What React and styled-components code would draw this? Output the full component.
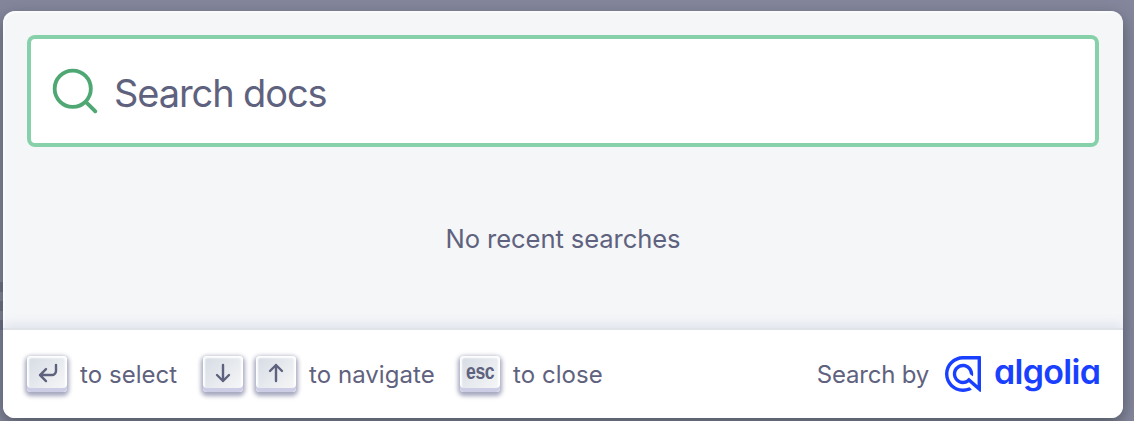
import React from "react";
import styled, { createGlobalStyle } from "styled-components";

const GlobalStyle = createGlobalStyle`
  *, *::before, *::after { box-sizing: border-box; }
  body {
    margin: 0;
    overflow: hidden;
    font-family: Inter, "Liberation Sans", sans-serif;
    font-weight: 400;
    color: #5f627e;
  }
`;

const Backdrop = styled.main`
  height: 421px;
  padding: 11px 11px 3px 3px;
  background:
    linear-gradient(#686b80, #686b80) 0 282px / 3px 10px no-repeat,
    linear-gradient(#686b80, #686b80) 0 301px / 3px 10px no-repeat,
    linear-gradient(#686b80, #686b80) 0 320px / 3px 10px no-repeat,
    #84869c;
`;

const Modal = styled.section`
  display: flex;
  flex-direction: column;
  height: 407px;
  border-radius: 12px;
  background: #f5f6f8;
  box-shadow: inset 2px 2px 0 rgba(255, 255, 255, 0.5), 0 6px 16px 0 #555a64;
`;

const Header = styled.header`
  padding: 24px 24px 0;
`;

const SearchForm = styled.div`
  display: flex;
  align-items: center;
  height: 112px;
  padding: 0 24px;
  border-radius: 8px;
  background: #fff;
  box-shadow: inset 0 0 0 4px #86d1aa;
`;

const SearchIcon = styled.svg`
  flex: none;
  width: 48px;
  height: 48px;
  fill: none;
  stroke: #4fa874;
  stroke-width: 1.6;
  stroke-linecap: round;
  stroke-linejoin: round;
`;

const Placeholder = styled.span`
  padding: 3px 0 0 15px;
  font-size: 38px;
  line-height: 48px;
  letter-spacing: -1.1px;
`;

const EmptyState = styled.p`
  flex: 1;
  margin: 0;
  padding-top: 76px;
  text-align: center;
  font-size: 25.6px;
  line-height: 32px;
  letter-spacing: -0.1px;
`;

const Footer = styled.footer`
  display: flex;
  align-items: center;
  justify-content: space-between;
  height: 88px;
  padding: 0 24px;
  border-radius: 0 0 12px 12px;
  background: #fff;
  box-shadow: 0 -2px 0 #e0e3e8, 0 -6px 12px 0 rgba(69, 98, 155, 0.12);
`;

const Commands = styled.ul`
  display: flex;
  margin: 0;
  padding: 0;
  list-style: none;
`;

const Command = styled.li`
  display: flex;
  align-items: center;
  width: ${(p) => (p.$width ? `${p.$width}px` : "auto")};
`;

const Key = styled.kbd`
  display: flex;
  flex: none;
  align-items: center;
  justify-content: center;
  width: 40px;
  height: 36px;
  margin-right: 13px;
  padding-bottom: 3px;
  border-radius: 4px;
  background: linear-gradient(-225deg, #d5dbe4, #f8f8f8);
  box-shadow: inset 0 -4px 0 #cdcde6, inset 0 0 2px 2px #fff,
    0 2px 4px 2px rgba(30, 35, 90, 0.4);
`;

const KeyIcon = styled.svg`
  width: 30px;
  height: 30px;
  fill: none;
  stroke: currentColor;
  stroke-width: 1.2;
  stroke-linecap: round;
  stroke-linejoin: round;
`;

const KeyText = styled.span`
  margin-top: -1px;
  font: 700 21.5px/30px "Liberation Sans", sans-serif;
  letter-spacing: -0.6px;
  transform: scaleX(0.82);
`;

const Label = styled.span`
  padding-top: 2px;
  font-size: 24px;
  line-height: 32px;
  letter-spacing: ${(p) => (p.$tracking ?? 0.05)}px;
  white-space: nowrap;
`;

const Credit = styled.div`
  display: flex;
  align-items: center;
`;

const Logo = styled.div`
  display: flex;
  align-items: center;
  margin-left: 16px;
  color: #1a40ff;
`;

const LogoMark = styled.svg`
  width: 36px;
  height: 36px;
  fill: currentColor;
`;

const Wordmark = styled.span`
  width: 105px;
  margin: -5px 0 0 13px;
  font-size: 34px;
  font-weight: 620;
  line-height: 40px;
  letter-spacing: -0.7px;
  font-feature-settings: "cv11" 1;
`;

const KeyGlyph = ({ d }) => (
  <KeyIcon viewBox="0 0 15 15" aria-hidden="true">
    <path d={d} />
  </KeyIcon>
);

export default function App() {
  return (
    <>
      <GlobalStyle />
      <Backdrop>
        <Modal>
          <Header>
            <SearchForm>
              <SearchIcon viewBox="0 0 20 20" aria-hidden="true">
                <path d="M14.386 14.386l4.0877 4.0877-4.0877-4.0877c-2.9418 2.9419-7.7115 2.9419-10.6533 0-2.9419-2.9418-2.9419-7.7115 0-10.6533 2.9418-2.9419 7.7115-2.9419 10.6533 0 2.9419 2.9418 2.9419 7.7115 0 10.6533z" />
              </SearchIcon>
              <Placeholder>Search docs</Placeholder>
            </SearchForm>
          </Header>
          <EmptyState>No recent searches</EmptyState>
          <Footer>
            <Commands>
              <Command $width={176}>
                <Key>
                  <KeyGlyph d="M12 3.53v3c0 1-1 2-2 2H4M7 11.53l-3-3 3-3" />
                </Key>
                <Label>to select</Label>
              </Command>
              <Command $width={257}>
                <Key>
                  <KeyGlyph d="M7.5 3.5v8M10.5 8.5l-3 3-3-3" />
                </Key>
                <Key>
                  <KeyGlyph d="M7.5 11.5v-8M10.5 6.5l-3-3-3 3" />
                </Key>
                <Label>to navigate</Label>
              </Command>
              <Command>
                <Key>
                  <KeyText>esc</KeyText>
                </Key>
                <Label>to close</Label>
              </Command>
            </Commands>
            <Credit>
              <Label $tracking={-0.2}>Search by</Label>
              <Logo>
                <LogoMark viewBox="0 0 500 500" aria-hidden="true">
                  <path d="M249.83,0C113.3,0,2,110.09,.03,246.16c-2,138.19,110.12,252.7,248.33,253.5,42.68.25,83.79-10.19,120.3-30.03,3.56-1.93,4.11-6.83,1.08-9.51l-23.38-20.72c-4.75-4.21-11.51-5.4-17.36-2.92-25.48,10.84-53.17,16.38-81.71,16.03-111.68-1.37-201.91-94.29-200.13-205.96,1.76-110.26,92-199.41,202.67-199.41h202.69V407.41l-115-102.18c-3.72-3.31-9.42-2.66-12.42,1.31-18.46,24.44-48.53,39.64-81.93,37.34-46.33-3.2-83.87-40.5-87.34-86.81-4.15-55.24,39.63-101.52,94-101.52,49.18,0,89.68,37.85,93.91,85.95,.38,4.28,2.31,8.27,5.52,11.12l29.95,26.55c3.4,3.01,8.79,1.17,9.63-3.3,2.16-11.55,2.92-23.58,2.07-35.92-4.82-70.34-61.8-126.93-132.17-131.26-80.68-4.97-148.13,58.14-150.27,137.25-2.09,77.1,61.08,143.56,138.19,145.26,32.19,.71,62.03-9.41,86.14-26.95l150.26,133.2c6.44,5.71,16.61,1.14,16.61-7.47V9.48C499.66,4.25,495.42,0,490.18,0H249.83Z" />
                </LogoMark>
                <Wordmark>algolia</Wordmark>
              </Logo>
            </Credit>
          </Footer>
        </Modal>
      </Backdrop>
    </>
  );
}
